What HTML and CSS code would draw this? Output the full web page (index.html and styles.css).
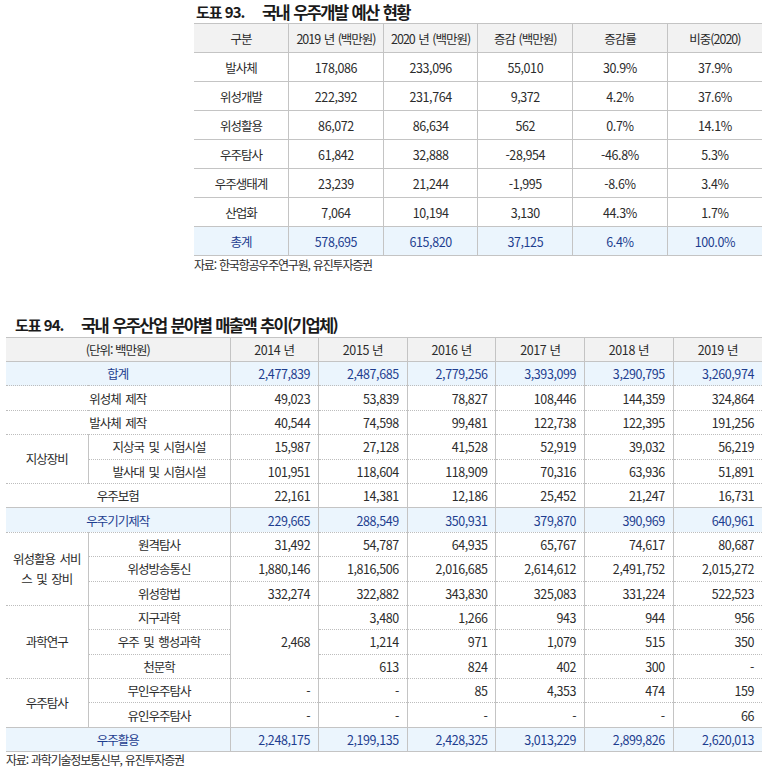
FILE: index.html
```html
<!DOCTYPE html>
<html lang="ko">
<head>
<meta charset="utf-8">
<title>우주산업 표</title>
<link rel="stylesheet" href="styles.css">
</head>
<body>
<section class="block block-1">
  <div class="caption"><span class="cap-num">도표 93.</span><span class="cap-title">국내 우주개발 예산 현황</span></div>
  <table class="t1">
    <thead>
      <tr><th>구분</th><th>2019 년 (백만원)</th><th>2020 년 (백만원)</th><th>증감 (백만원)</th><th>증감률</th><th>비중(2020)</th></tr>
    </thead>
    <tbody>
      <tr><td>발사체</td><td>178,086</td><td>233,096</td><td>55,010</td><td>30.9%</td><td>37.9%</td></tr>
      <tr><td>위성개발</td><td>222,392</td><td>231,764</td><td>9,372</td><td>4.2%</td><td>37.6%</td></tr>
      <tr><td>위성활용</td><td>86,072</td><td>86,634</td><td>562</td><td>0.7%</td><td>14.1%</td></tr>
      <tr><td>우주탐사</td><td>61,842</td><td>32,888</td><td>-28,954</td><td>-46.8%</td><td>5.3%</td></tr>
      <tr><td>우주생태계</td><td>23,239</td><td>21,244</td><td>-1,995</td><td>-8.6%</td><td>3.4%</td></tr>
      <tr><td>산업화</td><td>7,064</td><td>10,194</td><td>3,130</td><td>44.3%</td><td>1.7%</td></tr>
      <tr class="total"><td>총계</td><td>578,695</td><td>615,820</td><td>37,125</td><td>6.4%</td><td>100.0%</td></tr>
    </tbody>
  </table>
  <p class="source">자료: 한국항공우주연구원, 유진투자증권</p>
</section>

<section class="block block-2">
  <div class="caption"><span class="cap-num">도표 94.</span><span class="cap-title">국내 우주산업 분야별 매출액 추이(기업체)</span></div>
  <table class="t2">
    <colgroup><col class="c-group"><col class="c-sub"><col><col><col><col><col><col></colgroup>
    <thead>
      <tr><th colspan="2">(단위: 백만원)</th><th>2014 년</th><th>2015 년</th><th>2016 년</th><th>2017 년</th><th>2018 년</th><th>2019 년</th></tr>
    </thead>
    <tbody>
      <tr class="total"><td colspan="2" class="lbl">합계</td><td>2,477,839</td><td>2,487,685</td><td>2,779,256</td><td>3,393,099</td><td>3,290,795</td><td>3,260,974</td></tr>
      <tr><td colspan="2" class="lbl">위성체 제작</td><td>49,023</td><td>53,839</td><td>78,827</td><td>108,446</td><td>144,359</td><td>324,864</td></tr>
      <tr><td colspan="2" class="lbl">발사체 제작</td><td>40,544</td><td>74,598</td><td>99,481</td><td>122,738</td><td>122,395</td><td>191,256</td></tr>
      <tr><td rowspan="2" class="lbl grp">지상장비</td><td class="lbl">지상국 및 시험시설</td><td>15,987</td><td>27,128</td><td>41,528</td><td>52,919</td><td>39,032</td><td>56,219</td></tr>
      <tr><td class="lbl">발사대 및 시험시설</td><td>101,951</td><td>118,604</td><td>118,909</td><td>70,316</td><td>63,936</td><td>51,891</td></tr>
      <tr><td colspan="2" class="lbl">우주보험</td><td>22,161</td><td>14,381</td><td>12,186</td><td>25,452</td><td>21,247</td><td>16,731</td></tr>
      <tr class="total"><td colspan="2" class="lbl">우주기기제작</td><td>229,665</td><td>288,549</td><td>350,931</td><td>379,870</td><td>390,969</td><td>640,961</td></tr>
      <tr><td rowspan="3" class="lbl grp">위성활용 서비<br>스 및 장비</td><td class="lbl">원격탐사</td><td>31,492</td><td>54,787</td><td>64,935</td><td>65,767</td><td>74,617</td><td>80,687</td></tr>
      <tr><td class="lbl">위성방송통신</td><td>1,880,146</td><td>1,816,506</td><td>2,016,685</td><td>2,614,612</td><td>2,491,752</td><td>2,015,272</td></tr>
      <tr><td class="lbl">위성항법</td><td>332,274</td><td>322,882</td><td>343,830</td><td>325,083</td><td>331,224</td><td>522,523</td></tr>
      <tr><td rowspan="3" class="lbl grp">과학연구</td><td class="lbl">지구과학</td><td rowspan="3">2,468</td><td>3,480</td><td>1,266</td><td>943</td><td>944</td><td>956</td></tr>
      <tr><td class="lbl">우주 및 행성과학</td><td>1,214</td><td>971</td><td>1,079</td><td>515</td><td>350</td></tr>
      <tr><td class="lbl">천문학</td><td>613</td><td>824</td><td>402</td><td>300</td><td>-</td></tr>
      <tr><td rowspan="2" class="lbl grp">우주탐사</td><td class="lbl">무인우주탐사</td><td>-</td><td>-</td><td>85</td><td>4,353</td><td>474</td><td>159</td></tr>
      <tr><td class="lbl">유인우주탐사</td><td>-</td><td>-</td><td>-</td><td>-</td><td>-</td><td>66</td></tr>
      <tr class="total last"><td colspan="2" class="lbl">우주활용</td><td>2,248,175</td><td>2,199,135</td><td>2,428,325</td><td>3,013,229</td><td>2,899,826</td><td>2,620,013</td></tr>
    </tbody>
  </table>
  <p class="source">자료: 과학기술정보통신부, 유진투자증권</p>
</section>
</body>
</html>
```

FILE: styles.css
```css
html, body {
  margin: 0;
  padding: 0;
  background: #ffffff;
}

body {
  font-family: "Noto Sans CJK KR", "Noto Sans", sans-serif;
  color: #2b2b2b;
  width: 767px;
}

.block {
  display: flex;
  flex-direction: column;
}

.block-1 {
  margin-left: 194px;
  width: 568px;
}

.block-2 {
  margin-left: 6px;
  width: 756px;
  margin-top: 38px;
}

.caption {
  display: flex;
  align-items: center;
  height: 23px;
  color: #1a1a1a;
  white-space: nowrap;
}

.block-1 .caption {
  padding-left: 2px;
}

.block-2 .caption {
  padding-left: 9px;
  height: 25px;
}

.cap-num {
  display: inline-block;
  width: 66px;
  font-size: 15px;
  font-weight: 700;
  letter-spacing: -1px;
}

.cap-title {
  font-size: 16.5px;
  font-weight: 700;
  letter-spacing: -1.6px;
  word-spacing: 1px;
}

table {
  border-collapse: collapse;
  table-layout: fixed;
  font-size: 12.5px;
  letter-spacing: -0.4px;
}

th, td {
  padding: 0;
  font-weight: 400;
  white-space: nowrap;
  vertical-align: middle;
}

/* ---------- Table 93 ---------- */
.t1 {
  width: 568px;
}

.t1 th,
.t1 td {
  text-align: center;
  border: 1px solid #c4c4c4;
  height: 28px;
}

.t1 th {
  background: #f2f2f2;
}

.t1 th:first-child,
.t1 td:first-child {
  border-left: none;
}

.t1 th:last-child,
.t1 td:last-child {
  border-right: none;
}

.t1 td:first-child,
.t1 th {
  letter-spacing: -1px;
  word-spacing: 1px;
}

.t1 tr.total td {
  background: #ebf5fd;
  color: #1d3d8f;
}

.source {
  margin: 0;
  font-size: 12px;
  letter-spacing: -1.2px;
  word-spacing: 1px;
  color: #2b2b2b;
  line-height: 18px;
}

/* ---------- Table 94 ---------- */
.t2 {
  width: 756px;
}

.t2 .c-group {
  width: 82px;
}

.t2 .c-sub {
  width: 142px;
}

.t2 th {
  background: #f2f2f2;
  height: 23px;
  text-align: center;
  border: 1px solid #c4c4c4;
}

.t2 th:first-child {
  border-left: none;
  letter-spacing: -1px;
}

.t2 th:last-child {
  border-right: none;
}

.t2 td {
  height: 23.4px;
  text-align: right;
  padding-right: 8px;
  border-bottom: 1px dotted #bdbdbd;
  border-left: 1px solid #c4c4c4;
  border-right: 1px solid #c4c4c4;
}

.t2 td:last-child {
  border-right: none;
}

.t2 td.lbl {
  text-align: center;
  padding-right: 0;
  letter-spacing: -1px;
  word-spacing: 2px;
}

.t2 td.grp {
  border-left: none;
  line-height: 20px;
}

.t2 tr > td:first-child {
  border-left: none;
}

.t2 tr.total td {
  background: #ebf5fd;
  color: #1d3d8f;
  border-top: 1px solid #c4c4c4;
}

.t2 tr.last td {
  border-bottom: 1px solid #c4c4c4;
}

.block-2 .source {
  line-height: 16px;
}
```
